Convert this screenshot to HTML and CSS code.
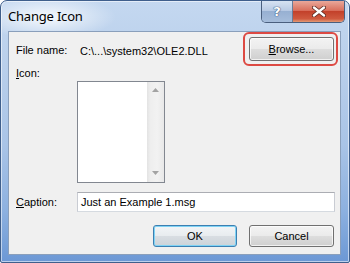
FILE: index.html
```html
<!DOCTYPE html>
<html>
<head>
<meta charset="utf-8">
<link rel="stylesheet" href="styles.css">
</head>
<body>
<div class="window">
  <div class="titlebar">
    <span class="title">Change Icon</span>
    <div class="caption-buttons">
      <div class="cbtn help"><span class="qmark">?</span></div>
      <div class="cbtn close">
        <svg width="14" height="11" viewBox="0 0 14 11">
          <path d="M2 1.5 L12 9.5 M12 1.5 L2 9.5" stroke="#5a2a22" stroke-width="4" stroke-linecap="round" fill="none"/>
          <path d="M2 1.5 L12 9.5 M12 1.5 L2 9.5" stroke="#ffffff" stroke-width="2.4" stroke-linecap="round" fill="none"/>
        </svg>
      </div>
    </div>
  </div>
  <div class="client">
    <div class="row file-row">
      <span class="label wide">File name:</span>
      <span class="path">C:\...\system32\OLE2.DLL</span>
      <div class="highlight"><button class="btn browse"><u>B</u>rowse...</button></div>
    </div>
    <div class="row icon-row">
      <span class="label top"><u>I</u>con:</span>
      <div class="listbox">
        <div class="list-area"></div>
        <div class="vscroll">
          <svg width="7" height="4" viewBox="0 0 7 4"><path d="M0 4 L3.5 0 L7 4 Z" fill="#a3a3a3"/></svg>
          <svg width="7" height="4" viewBox="0 0 7 4"><path d="M0 0 L7 0 L3.5 4 Z" fill="#a3a3a3"/></svg>
        </div>
      </div>
    </div>
    <div class="row caption-row">
      <span class="label"><u>C</u>aption:</span>
      <div class="textbox">Just an Example 1.msg</div>
    </div>
    <div class="row buttons-row">
      <button class="btn ok default">OK</button>
      <button class="btn cancel">Cancel</button>
    </div>
  </div>
</div>
</body>
</html>
```
FILE: styles.css
```css
html, body {
  margin: 0;
  padding: 0;
  background: #ffffff;
}
body {
  width: 350px;
  height: 263px;
  overflow: hidden;
}
.window {
  box-sizing: border-box;
  width: 350px;
  height: 263px;
  border: 1px solid #3f5f8c;
  border-radius: 7px 7px 2px 2px;
  display: flex;
  flex-direction: column;
  background:
    radial-gradient(ellipse 70px 22px at 45px 16px, rgba(255,255,255,0.85), rgba(255,255,255,0) 100%),
    linear-gradient(to bottom, #c4d8f0 0%, #b9cfeb 25%, #a9c4e7 55%, #8db1e0 80%, #6c98d5 100%);
  box-shadow: inset 0 0 0 1px rgba(255,255,255,0.55);
}
.titlebar {
  height: 30px;
  display: flex;
  align-items: flex-start;
  justify-content: space-between;
  padding-left: 7px;
  flex-shrink: 0;
}
.title {
  font-family: "Noto Sans", "Open Sans", sans-serif;
  font-size: 13px;
  color: #000;
  margin-top: 6px;
  letter-spacing: -0.2px;
}
.caption-buttons {
  display: flex;
  margin-right: 4px;
  border: 1px solid #4a5f7e;
  border-top: none;
  border-radius: 0 0 5px 5px;
  overflow: hidden;
  height: 21px;
}
.cbtn {
  display: flex;
  align-items: center;
  justify-content: center;
}
.help {
  width: 30px;
  border-right: 1px solid #6a7d98;
  background: linear-gradient(to bottom, #d6e2f2 0%, #b9cbe4 45%, #97b0d2 50%, #a6bddb 100%);
}
.qmark {
  font-family: "DejaVu Sans", sans-serif;
  font-weight: bold;
  font-size: 13px;
  color: #fff;
  text-shadow: 0 0 1px #3e5a80, 0 0 1px #3e5a80, 0 0 1px #3e5a80;
  line-height: 1;
}
.close {
  width: 51px;
  background: linear-gradient(to bottom, #e9a89a 0%, #d9705d 45%, #c3412b 50%, #cf5a3f 85%, #e39b77 100%);
}
.client {
  flex: 1;
  margin: 0 8px 7px 7px;
  border: 1px solid #8a9fbb;
  background: #f0f0f0;
  padding: 0 2px 0 7px;
  display: flex;
  flex-direction: column;
  font-family: "Liberation Sans", Arial, sans-serif;
  font-size: 11px;
  color: #000;
}
.row {
  display: flex;
}
.file-row {
  height: 34px;
  align-items: center;
}
.label {
  width: 61px;
  flex-shrink: 0;
  line-height: 13px;
}
.label.wide {
  width: 64px;
  margin-top: 3px;
}
.path {
  margin-top: 3px;
}
.highlight {
  margin-left: auto;
  border: 2px solid #dd4a43;
  border-radius: 6px;
  padding: 3px 2px 3px 4px;
}
.btn {
  box-sizing: border-box;
  font-family: "Liberation Sans", Arial, sans-serif;
  font-size: 11px;
  color: #000;
  border: 1px solid #707070;
  border-radius: 3px;
  background: linear-gradient(to bottom, #f3f3f3 0%, #ebebeb 48%, #dddddd 52%, #cfcfcf 100%);
  box-shadow: inset 0 0 0 1px rgba(255,255,255,0.7);
  padding: 0;
  margin: 0;
  display: flex;
  align-items: center;
  justify-content: center;
}
.browse {
  width: 85px;
  height: 24px;
}
.icon-row {
  align-items: flex-start;
}
.label.top {
  margin-top: 1px;
}
.listbox {
  margin-top: 15px;
  width: 88px;
  height: 102px;
  box-sizing: border-box;
  border: 1px solid #828790;
  display: flex;
  background: #fff;
}
.list-area {
  flex: 1;
}
.vscroll {
  width: 17px;
  background: linear-gradient(to right, #e3e3e3 0%, #eeeeee 20%, #f2f2f2 60%, #e8e8e8 100%);
  display: flex;
  flex-direction: column;
  justify-content: space-between;
  align-items: center;
  padding: 6px 0 7px 0;
  box-sizing: border-box;
}
.vscroll svg {
  display: block;
}
.caption-row {
  margin-top: 9px;
  align-items: center;
}
.textbox {
  box-sizing: border-box;
  width: 258px;
  height: 20px;
  border: 1px solid #abadb3;
  border-color: #abadb3 #c9ccd3 #d5dae0 #c9ccd3;
  background: #fff;
  padding-left: 3px;
  display: flex;
  align-items: center;
}
.buttons-row {
  margin-top: 13px;
  justify-content: flex-end;
  gap: 12px;
  padding-right: 4px;
}
.ok {
  width: 84px;
  height: 22px;
}
.cancel {
  width: 85px;
  height: 22px;
}
.btn.default {
  border-color: #3c7fb1;
  box-shadow: inset 0 0 0 1px #7fd3f5;
  background: linear-gradient(to bottom, #f2f5f7 0%, #e8ecef 48%, #d8dde2 52%, #ccd3d9 100%);
}
```
